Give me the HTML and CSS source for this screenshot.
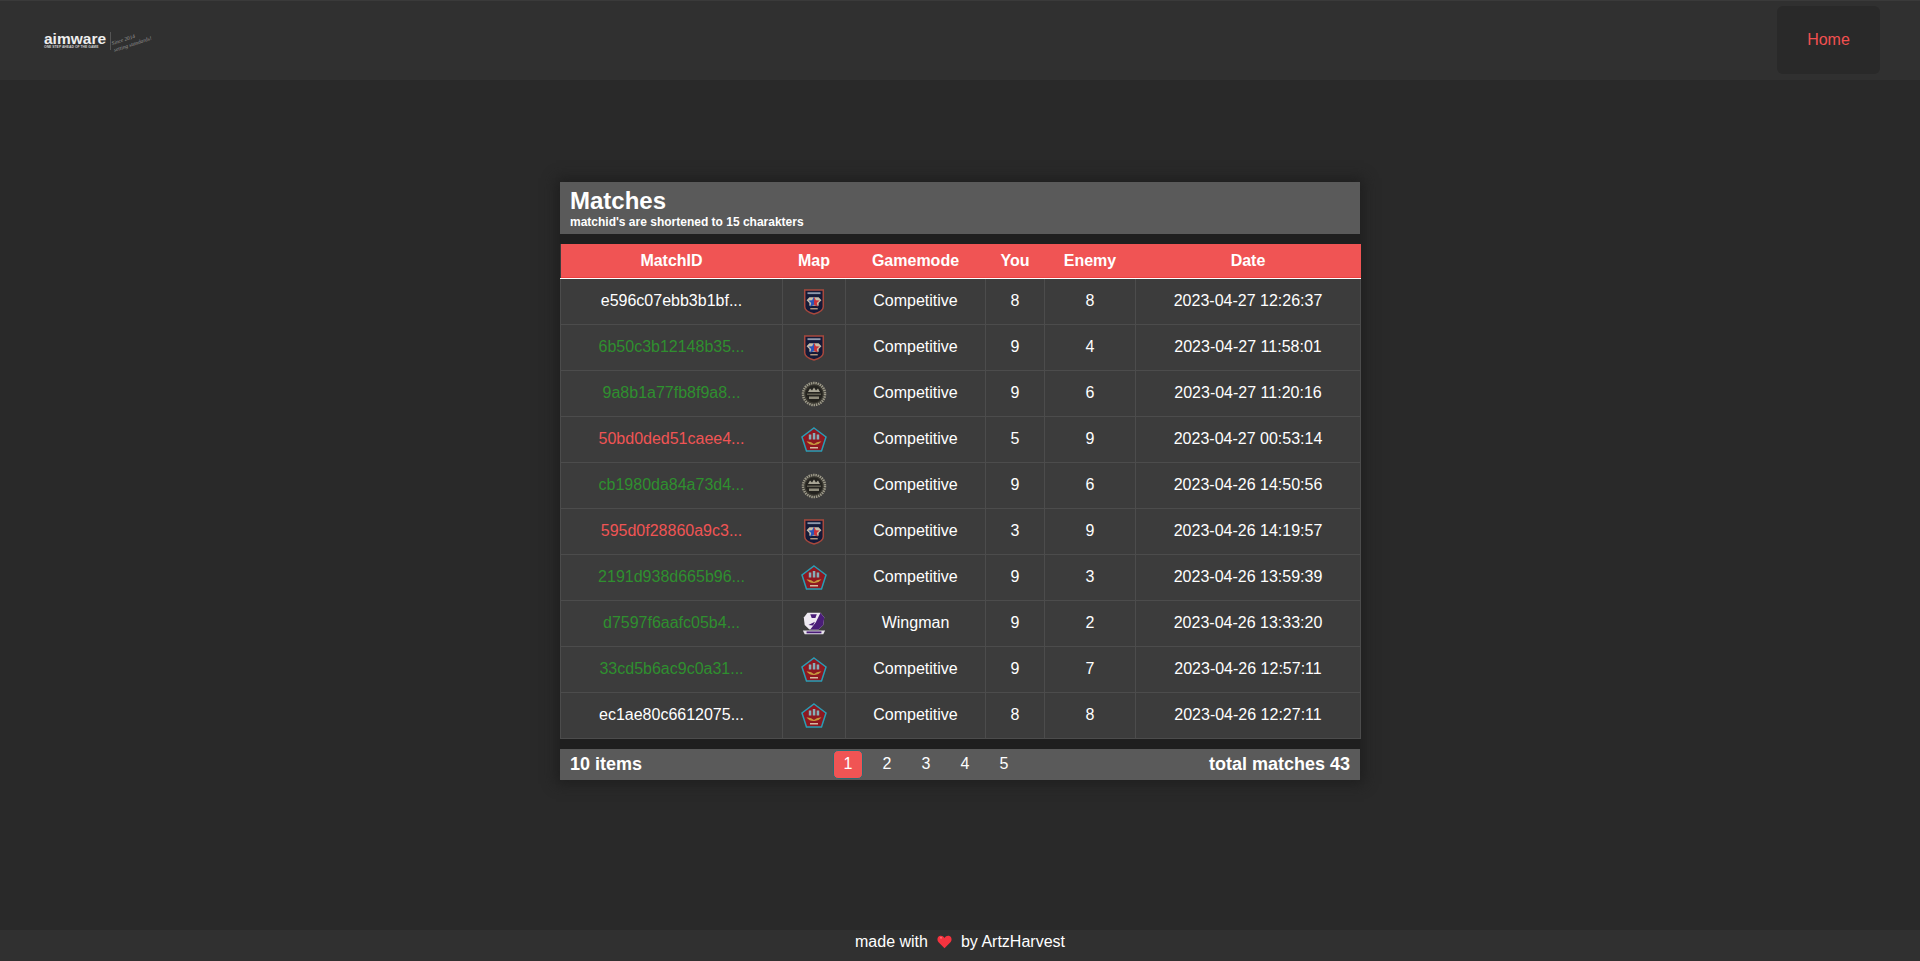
FILE: index.html
```html
<!DOCTYPE html>
<html>
	<head>
		<meta charset="UTF-8">
		<title>Matches</title>
		<link rel="stylesheet" href="styles.css">
	</head>
	<body>
		<svg class="defs" width="0" height="0">
			<symbol id="map-shield" viewBox="0 0 24 28">
				<path d="M2 1H22V19Q22 24 12 27Q2 24 2 19Z" fill="#141a38" stroke="#a8483c" stroke-width="1.600"/>
				<rect x="5" y="3.500" width="14" height="2" fill="#8f98ab"/>
				<path d="M4 12L7 9H17L20 12L17 15V18H7V15Z" fill="#c9bda8"/>
				<path d="M12 8L14 12L18 12.500L15 15L16 19L12 17Z" fill="#c8323a"/>
				<path d="M12 8L10 12L6 12.500L9 15L8 19L12 17Z" fill="#2b55b8"/>
				<rect x="8" y="20.500" width="8" height="1.500" fill="#b89a80"/>
			</symbol>
			<symbol id="map-round" viewBox="0 0 26 26">
				<circle cx="13" cy="13" r="12" fill="#3a3831"/>
				<circle cx="13" cy="13" r="11" fill="none" stroke="#9c998a" stroke-width="2.500" stroke-dasharray="1.500 .8"/>
				<circle cx="13" cy="13" r="8.500" fill="#24231f"/>
				<path d="M7 11L9 7.500L11 9.500L13 6.500L15 9.500L17 7.500L19 11Z" fill="#a8a595"/>
				<rect x="6" y="12.500" width="14" height="1.500" fill="#5e5c50"/>
				<rect x="8" y="15.500" width="10" height="2.500" fill="#8f8c7c"/>
			</symbol>
			<symbol id="map-penta" viewBox="0 0 26 26">
				<path d="M13 1L25 10L20.500 24H5.500L1 10Z" fill="#8e1820" stroke="#2a9db5" stroke-width="1.500"/>
				<rect x="7.800" y="7.500" width="2.500" height="5" fill="#86aeb8"/>
				<rect x="11.800" y="6" width="2.500" height="6.500" fill="#86aeb8"/>
				<rect x="15.700" y="7.500" width="2.500" height="5" fill="#86aeb8"/>
				<path d="M5.500 14.500Q10 14 13 17Q16 14 20.500 14.500Q17 18.500 13 18Q9 18.500 5.500 14.500Z" fill="#c4973c"/>
				<rect x="9" y="20" width="8" height="1.500" fill="#d8b8a0"/>
			</symbol>
			<symbol id="map-wing" viewBox="0 0 26 28">
				<path d="M6 2H20L24 7L23 15L18 20H8L3 15L2 7Z" fill="#efeaf2"/>
				<path d="M20 2L24 7L23 15L18 20H9L15 12Z" fill="#4a1d78"/>
				<path d="M9 3.500H16L14.500 7.500H10.500Z" fill="#4a1d78"/>
				<path d="M7 15L14 11.500L12 15.500Z" fill="#4a1d78"/>
				<path d="M1 21H25L23 25H3Z" fill="#e8e4ec"/>
				<rect x="5" y="22" width="16" height="2" fill="#4a1d78"/>
			</symbol>
		</svg>

		<div class="topbar">
			<div class="logo">
				<div class="logo-main">
					<span class="logo-name">aimware</span>
					<span class="logo-tag">ONE STEP AHEAD OF THE GAME</span>
				</div>
				<div class="logo-since">Since 2014<br>setting standards!</div>
			</div>
			<a class="home-btn">Home</a>
		</div>

		<div class="content">
			<div class="card">
				<div class="card-title">
					<h1>Matches</h1>
					<p>matchid's are shortened to 15 charakters</p>
				</div>
				<table class="matches">
					<colgroup>
						<col class="c-id"><col class="c-map"><col class="c-mode"><col class="c-you"><col class="c-enemy"><col class="c-date">
					</colgroup>
					<thead>
						<tr><th>MatchID</th><th>Map</th><th>Gamemode</th><th>You</th><th>Enemy</th><th>Date</th></tr>
					</thead>
					<tbody>
						<tr><td>e596c07ebb3b1bf...</td><td><svg class="map-icon"><use href="#map-shield"/></svg></td><td>Competitive</td><td>8</td><td>8</td><td>2023-04-27 12:26:37</td></tr>
						<tr><td class="win">6b50c3b12148b35...</td><td><svg class="map-icon"><use href="#map-shield"/></svg></td><td>Competitive</td><td>9</td><td>4</td><td>2023-04-27 11:58:01</td></tr>
						<tr><td class="win">9a8b1a77fb8f9a8...</td><td><svg class="map-icon"><use href="#map-round"/></svg></td><td>Competitive</td><td>9</td><td>6</td><td>2023-04-27 11:20:16</td></tr>
						<tr><td class="loss">50bd0ded51caee4...</td><td><svg class="map-icon"><use href="#map-penta"/></svg></td><td>Competitive</td><td>5</td><td>9</td><td>2023-04-27 00:53:14</td></tr>
						<tr><td class="win">cb1980da84a73d4...</td><td><svg class="map-icon"><use href="#map-round"/></svg></td><td>Competitive</td><td>9</td><td>6</td><td>2023-04-26 14:50:56</td></tr>
						<tr><td class="loss">595d0f28860a9c3...</td><td><svg class="map-icon"><use href="#map-shield"/></svg></td><td>Competitive</td><td>3</td><td>9</td><td>2023-04-26 14:19:57</td></tr>
						<tr><td class="win">2191d938d665b96...</td><td><svg class="map-icon"><use href="#map-penta"/></svg></td><td>Competitive</td><td>9</td><td>3</td><td>2023-04-26 13:59:39</td></tr>
						<tr><td class="win">d7597f6aafc05b4...</td><td><svg class="map-icon"><use href="#map-wing"/></svg></td><td>Wingman</td><td>9</td><td>2</td><td>2023-04-26 13:33:20</td></tr>
						<tr><td class="win">33cd5b6ac9c0a31...</td><td><svg class="map-icon"><use href="#map-penta"/></svg></td><td>Competitive</td><td>9</td><td>7</td><td>2023-04-26 12:57:11</td></tr>
						<tr><td>ec1ae80c6612075...</td><td><svg class="map-icon"><use href="#map-penta"/></svg></td><td>Competitive</td><td>8</td><td>8</td><td>2023-04-26 12:27:11</td></tr>
					</tbody>
				</table>
				<div class="pager">
					<span class="pager-text">10 items</span>
					<ul class="pages">
						<li class="active">1</li>
						<li>2</li>
						<li>3</li>
						<li>4</li>
						<li>5</li>
					</ul>
					<span class="pager-text">total matches 43</span>
				</div>
			</div>
		</div>

		<div class="footer">
			made with
			<svg class="heart" viewBox="0 0 24 22"><path d="M12 21L2.500 11.500C-.5 8 .5 3 4 1.500C7 .3 10 1.500 12 4.500C14 1.500 17 .3 20 1.500C23.500 3 24.500 8 21.500 11.500Z" fill="#f5333f"/><path d="M5 4.500Q7 3.500 8 5" stroke="#ff9a9a" stroke-width="1.500" fill="none"/></svg>
			by ArtzHarvest
		</div>
	</body>
</html>
```

FILE: styles.css
```css
*{
	box-sizing: border-box;
}
html,body{
	height: 100%;
}
body{
	margin: 0;
	display: flex;
	flex-direction: column;
	background-color: #292929;
	color: #fff;
	font-family: "Liberation Sans", Arial, sans-serif;
	font-size: 16px;
}
.defs{
	position: absolute;
}

.topbar{
	height: 80px;
	flex: none;
	display: flex;
	align-items: center;
	justify-content: space-between;
	padding: 0 40px 1px 44px;
	background-color: #303030;
	border-top: 1px solid #3a3a3a;
}
.logo{
	display: flex;
	align-items: center;
	margin-top: 2px;
	color: #eee;
}
.logo-main{
	display: flex;
	flex-direction: column;
	width: 67px;
	border-right: 1px solid #555;
}
.logo-name{
	font-weight: 700;
	font-size: 15.500px;
	line-height: 13px;
}
.logo-tag{
	font-size: 3.400px;
	line-height: 5px;
	white-space: nowrap;
	font-weight: 700;
	color: #ccc;
}
.logo-since{
	font-family: "Liberation Serif", serif;
	font-style: italic;
	font-size: 5.500px;
	line-height: 7px;
	color: #999;
	white-space: nowrap;
	margin-left: 1px;
	transform: rotate(-18deg);
}
.home-btn{
	width: 103px;
	height: 68px;
	display: flex;
	align-items: center;
	justify-content: center;
	background-color: #292929;
	border-radius: 6px;
	color: #f25050;
	font-size: 16px;
}

.content{
	flex: 1;
	display: flex;
	justify-content: center;
	padding-top: 102px;
}
.card{
	width: 800px;
	height: 598px;
	display: flex;
	flex-direction: column;
	gap: 10px;
	background-color: #1f1f1f;
	box-shadow: 0 0 12px 4px #1f1f1f;
}
.card-title{
	height: 52px;
	padding: 6px 10px 0;
	background-color: #5a5a5a;
	font-weight: bold;
}
.card-title h1{
	margin: 0;
	font-size: 24px;
	line-height: 26px;
}
.card-title p{
	margin: 1px 0 0;
	font-size: 12px;
	line-height: 14px;
}

.matches{
	width: 800px;
	height: 495px;
	table-layout: fixed;
	border-collapse: collapse;
	text-align: center;
	background-color: #3c3c3c;
}
.c-id{ width: 222px; }
.c-map{ width: 63px; }
.c-mode{ width: 140px; }
.c-you{ width: 59px; }
.c-enemy{ width: 91px; }
.c-date{ width: 225px; }
.matches th{
	height: 35px;
	padding: 0;
	background-color: #f05454;
	border-bottom: 1px solid #fff;
	box-shadow: inset 0 -1px 0 #ee3f3f;
	font-size: 16px;
}
.matches td{
	height: 46px;
	padding: 0 0 2px;
	border: 1px solid #4c4c4c;
}
.win{
	color: #2f8f2f;
}
.loss{
	color: #f05454;
}
.map-icon{
	width: 26px;
	height: 26px;
	display: block;
	margin: 2px auto 0;
}

.pager{
	height: 31px;
	display: grid;
	grid-template-columns: 263px auto 1fr;
	align-items: center;
	padding: 0 10px;
	background-color: #5a5a5a;
}
.pager-text{
	font-size: 18px;
	font-weight: bold;
}
.pager-text:last-child{
	text-align: right;
}
.pages{
	margin: 0;
	padding: 0;
	display: flex;
	gap: 9px;
	list-style: none;
}
.pages li{
	width: 30px;
	height: 29px;
	line-height: 28px;
	text-align: center;
	border-radius: 5px;
}
.pages .active{
	background-color: #f05454;
	border: 1px solid #2d6a70;
	line-height: 26px;
}

.footer{
	height: 31px;
	flex: none;
	display: flex;
	align-items: center;
	justify-content: center;
	gap: 7px;
	padding-bottom: 8px;
	background-color: #303030;
	font-size: 16px;
}
.heart{
	width: 15px;
	height: 14px;
	margin: 0 2px;
}
```
